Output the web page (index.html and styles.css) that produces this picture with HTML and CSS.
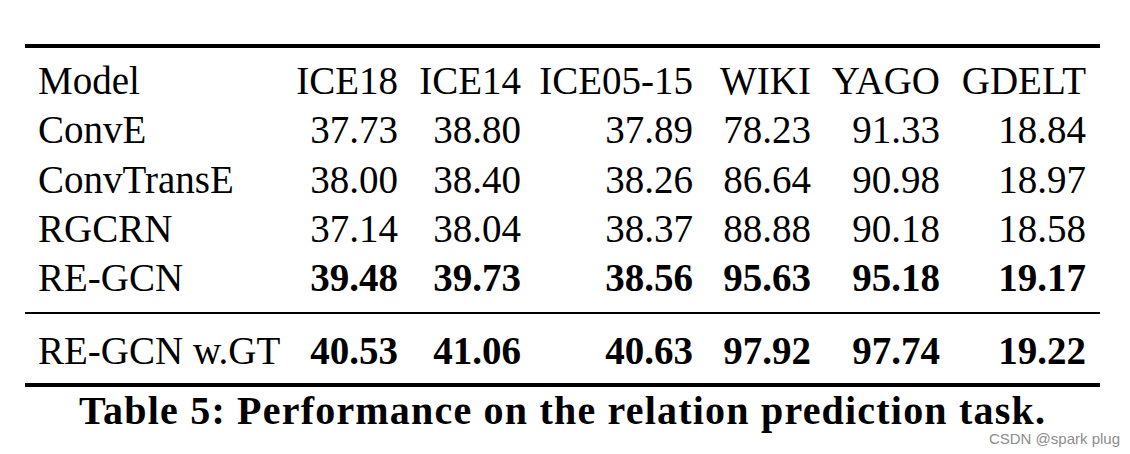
FILE: index.html
```html
<!DOCTYPE html>
<html lang="en">
<head>
    <meta charset="UTF-8">
    <meta name="viewport" content="width=device-width, initial-scale=1.0">
    <title>Table 5</title>
    <link rel="icon" href="data:,">
    <link rel="stylesheet" href="styles.css">
</head>
<body>
    <div class="page">
        <table class="results">
            <colgroup>
                <col class="c-model">
                <col class="c-ice18">
                <col class="c-ice14">
                <col class="c-ice0515">
                <col class="c-wiki">
                <col class="c-yago">
                <col class="c-gdelt">
            </colgroup>
            <thead>
                <tr class="head-row">
                    <th>Model</th>
                    <th>ICE18</th>
                    <th>ICE14</th>
                    <th>ICE05-15</th>
                    <th>WIKI</th>
                    <th>YAGO</th>
                    <th>GDELT</th>
                </tr>
            </thead>
            <tbody>
                <tr>
                    <td>ConvE</td>
                    <td>37.73</td>
                    <td>38.80</td>
                    <td>37.89</td>
                    <td>78.23</td>
                    <td>91.33</td>
                    <td>18.84</td>
                </tr>
                <tr>
                    <td>ConvTransE</td>
                    <td>38.00</td>
                    <td>38.40</td>
                    <td>38.26</td>
                    <td>86.64</td>
                    <td>90.98</td>
                    <td>18.97</td>
                </tr>
                <tr>
                    <td>RGCRN</td>
                    <td>37.14</td>
                    <td>38.04</td>
                    <td>38.37</td>
                    <td>88.88</td>
                    <td>90.18</td>
                    <td>18.58</td>
                </tr>
                <tr class="best mid-row">
                    <td>RE-GCN</td>
                    <td>39.48</td>
                    <td>39.73</td>
                    <td>38.56</td>
                    <td>95.63</td>
                    <td>95.18</td>
                    <td>19.17</td>
                </tr>
                <tr class="best last-row">
                    <td>RE-GCN w.GT</td>
                    <td>40.53</td>
                    <td>41.06</td>
                    <td>40.63</td>
                    <td>97.92</td>
                    <td>97.74</td>
                    <td>19.22</td>
                </tr>
            </tbody>
        </table>
        <div class="caption">Table 5: Performance on the relation prediction task.</div>
        <div class="watermark">CSDN @spark plug</div>
    </div>
</body>
</html>
```

FILE: styles.css
```css
body {
    margin: 0;
    background-color: #fff;
    color: #000;
    font-family: 'Liberation Serif', 'Times New Roman', serif;
}

.page {
    position: relative;
    width: 1130px;
    height: 454px;
    padding: 44px 0 0 25px;
    box-sizing: border-box;
}

.results {
    width: 1075px;
    table-layout: fixed;
    border-collapse: separate;
    border-spacing: 0;
    font-size: 39px;
    line-height: 49.25px;
}

.c-model { width: 248px; }
.c-ice18 { width: 125px; }
.c-ice14 { width: 123px; }
.c-ice0515 { width: 172px; }
.c-wiki { width: 118px; }
.c-yago { width: 129px; }
.c-gdelt { width: 160px; }

.results th,
.results td {
    padding: 0;
    font-weight: normal;
    text-align: right;
    white-space: nowrap;
}

.results th:first-child,
.results td:first-child {
    text-align: left;
    padding-left: 13px;
}

.results th:last-child,
.results td:last-child {
    padding-right: 14px;
}

.head-row th {
    border-top: 4px solid #000;
    padding-top: 8px;
}

.best td {
    font-weight: bold;
}

.best td:first-child {
    font-weight: normal;
}

.mid-row td {
    padding-bottom: 10px;
    border-bottom: 2px solid #000;
}

.last-row td {
    padding-top: 12px;
    padding-bottom: 7px;
    border-bottom: 4px solid #000;
}

.caption {
    width: 1075px;
    margin-top: 6px;
    text-align: center;
    font-weight: bold;
    font-size: 40px;
    line-height: 36px;
    letter-spacing: 1.2px;
}

.watermark {
    position: absolute;
    right: 10px;
    top: 431px;
    font-family: 'Liberation Sans', sans-serif;
    font-size: 15px;
    line-height: 16px;
    color: #8c8c8c;
}
```
